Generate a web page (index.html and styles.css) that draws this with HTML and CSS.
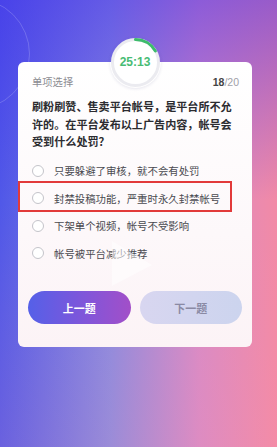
FILE: index.html
```html
<!DOCTYPE html>
<html lang="zh">

<head>
    <meta charset="UTF-8">
    <meta name="viewport" content="width=device-width, initial-scale=1.0">
    <title>答题</title>
    <link rel="stylesheet" href="styles.css">
</head>

<body>
    <div class="page">
        <div class="ring"></div>
        <div class="card">
            <div class="timer">
                <svg width="51" height="51" viewBox="0 0 51 51">
                    <circle cx="25.5" cy="25.5" r="23" fill="#fff" stroke="#ebebf0" stroke-width="3"/>
                    <path d="M25.5 2.5 A23 23 0 0 1 45.4 14" fill="none" stroke="#3dbb6c" stroke-width="3" stroke-linecap="round"/>
                </svg>
                <span class="time">25:13</span>
            </div>
            <div class="head">
                <span class="type">单项选择</span>
                <span class="count"><b>18</b>/20</span>
            </div>
            <div class="question">刷粉刷赞、售卖平台帐号，是平台所不允许的。在平台发布以上广告内容，帐号会受到什么处罚？</div>
            <div class="options">
                <div class="opt"><span class="dot"></span>只要躲避了审核，就不会有处罚</div>
                <div class="opt marked"><span class="dot"></span>封禁投稿功能，严重时永久封禁帐号</div>
                <div class="opt"><span class="dot"></span>下架单个视频，帐号不受影响</div>
                <div class="opt"><span class="dot"></span>帐号被平台减少推荐</div>
                <svg class="play" width="44" height="48" viewBox="0 0 44 48">
                    <polygon points="2,2 42,26 2,47" fill="#fff" fill-opacity="0.5"/>
                </svg>
            </div>
            <div class="action">
                <button class="prev">上一题</button>
                <button class="next">下一题</button>
            </div>
        </div>
    </div>
</body>

</html>
```

FILE: styles.css
```css
*{
    box-sizing: border-box;
}
body{
    margin: 0;
    font-family: "Noto Sans CJK SC", "Noto Sans", sans-serif;
}
.page{
    position: relative;
    height: 447px;
    overflow: hidden;
    padding-top: 62px;
    background:
        linear-gradient(180deg, rgba(65, 45, 235, 0.5) 0%, rgba(90, 90, 230, 0) 45%, rgba(255, 150, 170, 0.15) 100%),
        linear-gradient(90deg, #5058e8 0%, #8a8ae0 40%, #d88ac6 72%, #f28aa6 100%);
}
.ring{
    position: absolute;
    left: -82px;
    top: -2px;
    width: 112px;
    height: 112px;
    border-radius: 50%;
    border: 1px solid rgba(255, 255, 255, 0.18);
}
.card{
    position: relative;
    margin: 0 25px 0 18px;
    padding: 13px 13px 23px 14px;
    border-radius: 6px;
    background: linear-gradient(180deg, #ffffff 0%, #fdf8fa 60%, #fcf3f6 100%);
}
.timer{
    position: absolute;
    left: 50%;
    top: -25px;
    width: 51px;
    height: 51px;
    margin-left: -25.5px;
    border-radius: 50%;
    box-shadow: 0 1px 3px rgba(60, 60, 120, 0.12);
}
.timer svg{
    display: block;
}
.time{
    position: absolute;
    left: 0;
    right: 0;
    top: 18px;
    text-align: center;
    font-family: "Liberation Sans", Arial, sans-serif;
    font-size: 12px;
    font-weight: bold;
    line-height: 14px;
    color: #48bc74;
}
.head{
    display: flex;
    justify-content: space-between;
    line-height: 14px;
    font-size: 10.3px;
    color: #8c8c92;
}
.count{
    font-family: "Liberation Sans", Arial, sans-serif;
    font-size: 10.5px;
    color: #a0a0a8;
}
.count b{
    color: #444;
}
.question{
    margin-top: 9px;
    font-size: 11.1px;
    line-height: 17.5px;
    font-weight: bold;
    color: #2c2c30;
}
.options{
    position: relative;
    margin-top: 6.5px;
}
.opt{
    position: relative;
    display: flex;
    align-items: center;
    height: 27.5px;
    font-size: 10.4px;
    color: #4a4a50;
}
.dot{
    width: 12px;
    height: 12px;
    margin-right: 10px;
    border-radius: 50%;
    border: 1px solid #c4c4ca;
    background: #fff;
}
.marked::after{
    content: "";
    position: absolute;
    left: -14px;
    right: 7px;
    top: -4px;
    bottom: 0;
    border: 2px solid #e23a3a;
}
.play{
    position: absolute;
    left: 78px;
    top: 82px;
}
.action{
    display: flex;
    gap: 9px;
    margin: 24px -3px 0 -4px;
}
.action button{
    flex: 1;
    height: 33px;
    border: none;
    border-radius: 17px;
    font-family: "Noto Sans CJK SC", sans-serif;
    font-size: 11px;
    font-weight: bold;
}
.prev{
    color: #fff;
    background: linear-gradient(90deg, #5560e8 0%, #8455d8 60%, #a24fc8 100%);
}
.next{
    color: #8a8aa4;
    font-weight: normal;
    background: linear-gradient(90deg, #d8d6f0 0%, #ccd4ee 100%);
}
```
